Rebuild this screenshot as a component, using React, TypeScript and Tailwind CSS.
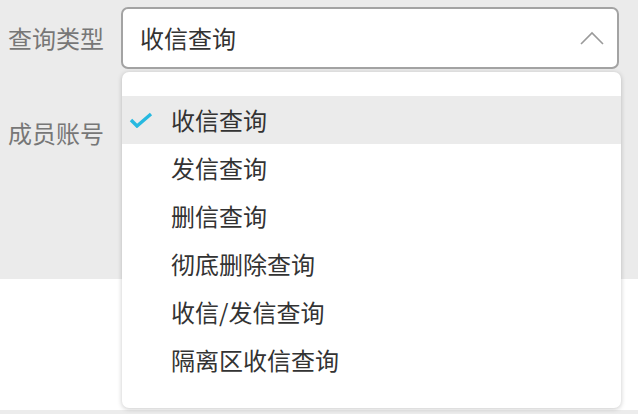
import React from "react";

const options = ["收信查询", "发信查询", "删信查询", "彻底删除查询", "收信/发信查询", "隔离区收信查询"];

function CheckIcon() {
  return (
    <svg width="24" height="16" viewBox="0 0 24 16" fill="none">
      <polyline points="2,8 8,14 22,2" stroke="#27b9e0" strokeWidth="3.4" strokeLinecap="butt" strokeLinejoin="miter" />
    </svg>
  );
}

function ChevronUp() {
  return (
    <svg width="24" height="14" viewBox="0 0 24 14" fill="none">
      <polyline points="1,13 12,2 23,13" stroke="#9a9a9a" strokeWidth="1.6" />
    </svg>
  );
}

export default function App() {
  const selected = 0;

  return (
    <div
      className="relative w-[638px] h-[414px] bg-white overflow-hidden"
      style={{ fontFamily: "'Noto Sans CJK SC', 'Noto Sans', sans-serif" }}
    >
      <div className="h-[279px] bg-[#ebebeb] pt-[7px]">
        <div className="flex items-center h-[62px]">
          <div className="w-[121px] pl-[8px] text-[24px] text-[#777]">查询类型</div>
          <div className="flex items-center justify-between w-[498px] h-[62px] pl-[17px] pr-[13px] bg-white border-2 border-[#a3a3a3] rounded-[7px]">
            <span className="text-[24px] text-[#333]">收信查询</span>
            <ChevronUp />
          </div>
        </div>
        <div className="flex items-center h-[48px] mt-[40px]">
          <div className="pl-[8px] text-[24px] text-[#777]">成员账号</div>
        </div>
      </div>
      <div className="h-[131px] bg-white" />
      <div className="h-[4px] bg-[#ececec]" />

      {/* dropdown menu */}
      <div className="absolute left-[122px] top-[72px] w-[499px] h-[336px] py-[24px] bg-white rounded-[7px] shadow-[0_1px_5px_rgba(0,0,0,0.22)]">
        {options.map((o, i) => (
          <div
            key={o}
            className={`relative flex items-center h-[48px] pl-[49px] text-[24px] text-[#333] ${i === selected ? "bg-[#ebebeb]" : ""}`}
          >
            {i === selected && (
              <span className="absolute left-[7px] top-[16px]">
                <CheckIcon />
              </span>
            )}
            {o}
          </div>
        ))}
      </div>
    </div>
  );
}
